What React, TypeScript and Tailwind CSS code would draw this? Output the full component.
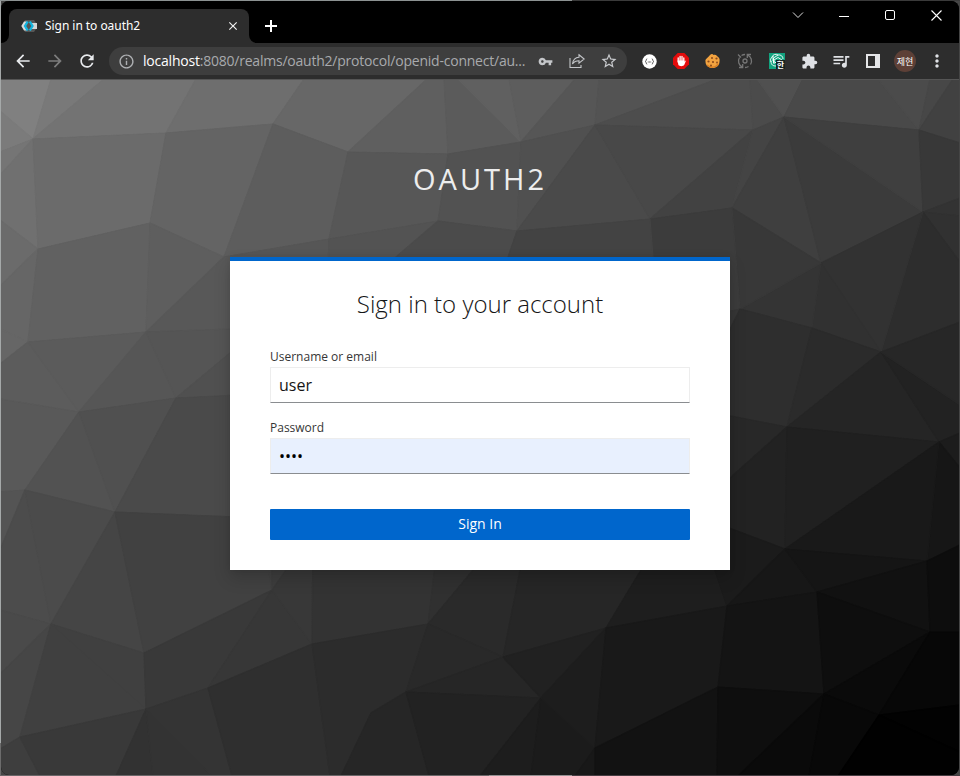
import React from "react";
import {
  MdArrowBack,
  MdArrowForward,
  MdClose,
  MdExtension,
  MdInfoOutline,
  MdMoreVert,
  MdQueueMusic,
  MdRefresh,
  MdStarBorder,
  MdVpnKey,
} from "react-icons/md";

// Facets of the low-poly backdrop: grey level and outline, in window coordinates.
const facets: [number, string][] = [
  [0x80, "0,79 51,79 33,139 0,111"],
  [0x79, "51,79 104,79 33,139"],
  [0x73, "104,79 196,79 166,133 33,139"],
  [0x6e, "196,79 304,79 273,124 166,133"],
  [0x67, "304,79 427,79 348,152 273,124"],
  [0x5f, "427,79 444,79 448,154 348,152"],
  [0x5b, "444,79 458,79 521,142 448,154"],
  [0x60, "458,79 509,79 521,142"],
  [0x5d, "509,79 575,79 521,142"],
  [0x56, "575,79 599,79 595,125 521,142"],
  [0x53, "599,79 717,79 595,125"],
  [0x4d, "717,79 750,79 753,130 595,125"],
  [0x4b, "750,79 757,79 784,117 753,130"],
  [0x50, "757,79 803,79 784,117"],
  [0x49, "803,79 878,79 919,130 784,117"],
  [0x4b, "878,79 930,79 919,130"],
  [0x47, "930,79 953,79 919,130"],
  [0x41, "953,79 960,79 960,143 919,130"],
  [0x7b, "0,111 33,139 0,152"],
  [0x75, "0,152 33,139 0,175"],
  [0x70, "0,175 33,139 38,249 0,220"],
  [0x6b, "0,220 38,249 0,286"],
  [0x66, "0,286 38,249 28,342 0,329"],
  [0x66, "0,329 28,342 0,364"],
  [0x6b, "33,139 166,133 150,223 38,249"],
  [0x64, "166,133 273,124 224,257 150,223"],
  [0x5d, "273,124 348,152 329,239 224,257"],
  [0x57, "348,152 448,154 438,221 329,239"],
  [0x52, "448,154 521,142 517,231 438,221"],
  [0x50, "521,142 595,125 517,231"],
  [0x4a, "595,125 650,219 517,231"],
  [0x48, "595,125 753,130 650,219"],
  [0x42, "753,130 732,208 650,219"],
  [0x44, "753,130 784,117 732,208"],
  [0x3f, "784,117 821,263 732,208"],
  [0x3b, "784,117 923,212 821,263"],
  [0x3f, "784,117 919,130 923,212"],
  [0x38, "919,130 960,143 960,198 923,212"],
  [0x33, "923,212 960,198 960,216"],
  [0x31, "923,212 960,216 960,262"],
  [0x2d, "923,212 960,262 960,322 881,352"],
  [0x32, "923,212 821,263 881,352"],
  [0x31, "821,263 881,352 812,328"],
  [0x34, "821,263 812,328 740,309"],
  [0x38, "732,208 821,263 740,309"],
  [0x3c, "650,219 732,208 740,309 700,318 650,309"],
  [0x56, "224,257 329,239 327,300 224,300"],
  [0x53, "329,239 438,221 396,257 396,300 327,300"],
  [0x4b, "438,221 517,231 508,257 508,300 396,300 396,257"],
  [0x43, "517,231 650,219 653,257 653,300 508,300 508,257"],
  [0x61, "38,249 150,223 146,332 28,342"],
  [0x5e, "150,223 224,257 146,332"],
  [0x58, "224,257 260,257 260,328 146,332"],
  [0x5c, "28,342 79,412 0,399 0,364"],
  [0x5b, "28,342 146,332 79,412"],
  [0x56, "146,332 176,398 79,412"],
  [0x55, "146,332 260,328 176,398"],
  [0x50, "176,398 260,328 260,394"],
  [0x59, "0,399 79,412 25,490 0,492"],
  [0x54, "0,492 25,490 0,550"],
  [0x52, "79,412 115,512 25,490"],
  [0x50, "79,412 176,398 115,512"],
  [0x4a, "176,398 260,394 260,518 115,512"],
  [0x4c, "25,490 51,624 0,610 0,550"],
  [0x4b, "25,490 115,512 51,624"],
  [0x45, "115,512 144,653 51,624"],
  [0x41, "115,512 260,518 272,590 144,653"],
  [0x4a, "0,610 51,624 0,674"],
  [0x46, "0,674 51,624 20,737 0,749"],
  [0x40, "51,624 146,709 20,737"],
  [0x40, "51,624 144,653 146,709"],
  [0x39, "144,653 272,590 208,688 146,709"],
  [0x37, "272,590 312,644 208,688"],
  [0x3e, "0,749 20,737 40,776 0,776"],
  [0x39, "20,737 146,709 116,776 40,776"],
  [0x32, "146,709 153,776 116,776"],
  [0x33, "146,709 212,776 153,776"],
  [0x34, "146,709 208,688 232,776 212,776"],
  [0x2f, "208,688 312,644 330,776 232,776"],
  [0x41, "260,518 272,550 272,590"],
  [0x3d, "272,540 307,540 272,590"],
  [0x38, "307,540 313,540 312,644 272,590"],
  [0x33, "313,540 440,540 428,624 312,644"],
  [0x30, "438,540 498,540 428,624"],
  [0x2a, "498,540 526,540 503,657 428,624"],
  [0x26, "526,540 659,540 606,628 503,657"],
  [0x1e, "659,540 705,540 727,606 606,628"],
  [0x2c, "312,644 428,624 406,692 371,713 341,776 330,776"],
  [0x29, "428,624 503,657 406,692"],
  [0x26, "503,657 541,698 406,692"],
  [0x21, "503,657 606,628 541,698"],
  [0x26, "371,713 406,692 429,776 341,776"],
  [0x22, "406,692 541,698 480,776 429,776"],
  [0x1d, "541,698 531,776 480,776"],
  [0x1b, "541,698 595,748 575,776 531,776"],
  [0x1d, "541,698 606,628 595,748"],
  [0x18, "595,748 595,776 575,776"],
  [0x19, "606,628 727,606 718,687 595,748"],
  [0x12, "595,748 718,687 717,776 595,776"],
  [0x36, "700,318 740,309 700,390"],
  [0x2e, "740,309 812,328 787,427 700,410 700,390"],
  [0x2b, "812,328 881,352 787,427"],
  [0x25, "881,352 939,442 787,427"],
  [0x22, "881,352 960,405 960,433 939,442"],
  [0x27, "881,352 960,322 960,405"],
  [0x28, "700,410 787,427 700,505"],
  [0x22, "787,427 785,549 700,517 700,505"],
  [0x20, "787,427 939,442 785,549"],
  [0x1c, "939,442 960,433 960,468"],
  [0x16, "939,442 960,468 960,545 927,561"],
  [0x19, "939,442 927,561 785,549"],
  [0x1b, "700,517 785,549 727,606 705,540"],
  [0x17, "785,549 817,592 727,606"],
  [0x15, "785,549 927,561 817,592"],
  [0x11, "927,561 930,632 817,592"],
  [0x0d, "927,561 960,545 960,632 930,632"],
  [0x14, "727,606 817,592 824,694 718,687"],
  [0x0e, "817,592 930,632 824,694"],
  [0x0a, "930,632 879,715 824,694"],
  [0x07, "930,632 960,632 960,705 879,715"],
  [0x0e, "718,687 824,694 738,776 717,776"],
  [0x0a, "824,694 809,776 738,776"],
  [0x08, "824,694 879,715 838,776 809,776"],
  [0x02, "879,715 960,705 960,752"],
  [0x01, "879,715 960,752 960,776 838,776"],
];

function Backdrop() {
  return (
    <svg className="col-start-1 row-start-1 block" width="958" height="695" viewBox="1 80 958 695">
      {facets.map(([level, points], i) => {
        const tone = `rgb(${level},${level},${level})`;
        return <polygon key={i} points={points} fill={tone} stroke={tone} strokeWidth="1.2" strokeLinejoin="bevel" />;
      })}
    </svg>
  );
}

function Slot({ children }: { children: React.ReactNode }) {
  return <span className="flex h-7 w-8 shrink-0 items-center justify-center">{children}</span>;
}

function KeycloakIcon() {
  return (
    <svg className="shrink-0" width="16" height="16" viewBox="0 0 16 16">
      <path d="M4 2h9l2 3v6l-2 3H4L1 8z" fill="#555" />
      <path d="M11 5h5v6h-5z" fill="#d4d4d4" />
      <path d="M3 3.500h3L3.500 8 6 12.500H3L.300 8z" fill="#dadada" />
      <path d="M6.700 3.500 4 8l2.700 4.500M8.800 3.500 11.500 8l-2.700 4.500" fill="none" stroke="#12b5e0" strokeWidth="2.300" />
    </svg>
  );
}

function TitleBar() {
  return (
    <div className="flex h-[42px] items-start bg-black">
      <div className="flex h-[42px] w-2 items-end bg-[#2d2d2d]">
        <div className="h-[42px] w-2 rounded-br-lg bg-black" />
      </div>
      <div className="mt-2 flex h-[34px] w-60 items-center rounded-t-lg bg-[#2d2d2d] pl-3 pr-[9px]">
        <KeycloakIcon />
        <span className="ml-2 flex-1 whitespace-nowrap font-['Noto_Sans','Open_Sans',sans-serif] text-[12px] leading-4 tracking-[-0.05px] text-white">
          Sign in to oauth2
        </span>
        <MdClose size={14} color="#f1f1f1" />
      </div>
      <div className="h-[42px] w-2 bg-[#2d2d2d]">
        <div className="h-[42px] w-2 rounded-bl-lg bg-black" />
      </div>
      <svg className="mt-[19px] ml-2" width="12" height="12" viewBox="0 0 12 12" fill="#fff">
        <path d="M5 0h2v5h5v2H7v5H5V7H0V5h5z" />
      </svg>
      <div className="ml-auto flex">
        <span className="flex h-7 w-[46px] items-center justify-center">
          <svg width="12" height="8" viewBox="0 0 12 8" fill="none" stroke="#ddd">
            <path d="m1 1.500 5 5 5-5" />
          </svg>
        </span>
        <span className="flex h-7 w-[46px] items-center justify-center">
          <span className="mt-0.5 h-px w-2.5 bg-white" />
        </span>
        <span className="flex h-7 w-[46px] items-center justify-center">
          <span className="size-2.5 rounded-[2px] border border-white" />
        </span>
        <span className="flex h-7 w-[46px] items-center justify-center">
          <svg width="11" height="11" viewBox="0 0 11 11" stroke="#fff" strokeWidth="1.100">
            <path d="m.5.5 10 10m0-10-10 10" />
          </svg>
        </span>
      </div>
    </div>
  );
}

function Toolbar() {
  return (
    <div className="flex h-9 items-center bg-[#2d2d2d] pl-1.5">
      <Slot><MdArrowBack size={20} color="#e8eaed" /></Slot>
      <Slot><MdArrowForward size={20} color="#7c7c7c" /></Slot>
      <Slot><MdRefresh size={20} color="#e8eaed" /></Slot>
      <div className="ml-1.5 flex h-7 w-[518px] shrink-0 items-center rounded-full bg-[#3e3e3e] pl-[9px] pr-0.5">
        <MdInfoOutline className="shrink-0" size={17} color="#aeb0b3" />
        <span className="ml-2 w-[386px] shrink-0 whitespace-nowrap font-['Open_Sans','Noto_Sans',sans-serif] text-[14px] leading-5 tracking-[-0.22px] text-[#a8aaad]">
          <span className="text-white">localhost</span>:8080/realms/oauth2/protocol/openid-connect/au...
        </span>
        <div className="ml-auto flex">
          <Slot><MdVpnKey size={15} color="#c4c6c9" /></Slot>
          <Slot>
            <svg width="16" height="16" viewBox="0 0 16 16" fill="none" stroke="#c4c6c9" strokeWidth="1.100">
              <path d="M1 5v9.500h11V12" />
              <path d="M10 1.800 15.200 6 10 10.200V7.800C7.500 7.800 5 8.700 3.500 11 4 7.200 6.500 4.500 10 4.300z" />
            </svg>
          </Slot>
          <Slot><MdStarBorder size={18} color="#c8cacd" /></Slot>
        </div>
      </div>
      <div className="ml-1.5 flex items-center">
        <Slot>
          <svg width="15" height="15" viewBox="0 0 15 15">
            <circle cx="7.500" cy="7.500" r="7.200" fill="#fff" />
            <path d="M5.200 4.800C3.800 4.800 4.800 6.800 3.300 7.500c1.500.700.500 2.700 1.900 2.700M9.800 4.800c1.400 0 .4 2 1.900 2.700-1.500.700-.5 2.700-1.900 2.700M5.800 8h.9m.4 0H8m.3 0h.9" fill="none" stroke="#555" />
          </svg>
        </Slot>
        <Slot>
          <svg width="16" height="16" viewBox="0 0 16 16">
            <path d="M4.700 0h6.600L16 4.700v6.600L11.300 16H4.700L0 11.300V4.700z" fill="#e30b0b" />
            <path d="M5.200 9V4.800M7.100 8V3.300M9 8V3.300M10.800 9V5" stroke="#fff" strokeWidth="1.300" strokeLinecap="round" />
            <path d="M4.500 7.500h6.900v1.200l1.800-1.400-2 4.700c-1 1.500-4.700 1.500-5.800 0z" fill="#fff" />
          </svg>
        </Slot>
        <Slot>
          <svg width="16" height="16" viewBox="0 0 16 16">
            <path d="M5 2c1.500-1.500 3-1 3.500 0 2-1 3.500.5 4 1.500 2 1 2.500 3 2 5 0 4-3 6.500-7 6.500-4 0-7-2.500-7-6.500C0 6 2 5.500 5 2z" fill="#f2a340" />
            <path d="M2 12c3 3 8.500 3 11.500-1" fill="none" stroke="#d87f23" strokeWidth="1.500" />
            <g fill="#8b4a1b">
              <circle cx="7" cy="5" r="1" /><circle cx="11.500" cy="5.500" r="1.100" />
              <circle cx="3.500" cy="8.500" r="1.100" /><circle cx="8" cy="9" r="1.100" />
              <circle cx="12" cy="9.500" r=".9" /><circle cx="6" cy="12.500" r="1" />
            </g>
          </svg>
        </Slot>
        <Slot>
          <svg width="16" height="16" viewBox="0 0 16 16" fill="none" stroke="#757575" strokeWidth="1.300">
            <path d="M5.500 14A6.500 6.500 0 0 1 2.500 4.500M2 14.500h3.700V11" />
            <path d="M4.500 2.500A6.500 6.500 0 0 1 8 1.500" />
            <path d="M10.500 2A6.500 6.500 0 0 1 13.500 11.500M14 1.500h-3.700V5" />
            <path d="M11.500 13.500A6.500 6.500 0 0 1 8 14.500M1 1.500l3 3" />
            <circle cx="8" cy="8" r="2" />
          </svg>
        </Slot>
        <Slot>
          <span className="grid size-4 bg-[#12a37f]">
            <svg className="col-start-1 row-start-1" width="16" height="16" viewBox="0 0 16 16" fill="none" stroke="#fff" strokeWidth=".9">
              <path d="M2 9a4 4 0 0 1 1-5 4 4 0 0 1 6-2 4 4 0 0 1 5 4M2 8c0 4 2 5 5 5M4 3v5l5 3M9 2 4.500 5v5M13 7 9 4.500 5 7v4" />
            </svg>
            <span className="col-start-1 row-start-1 mt-[7px] ml-[7px] flex size-[9px] items-center justify-center overflow-hidden bg-[#172421] font-['Noto_Sans_CJK_KR',sans-serif] text-[8px] font-bold leading-[9px] text-white">
              한
            </span>
          </span>
        </Slot>
        <Slot><MdExtension size={17} color="#dfe1e5" /></Slot>
        <Slot><MdQueueMusic size={20} color="#dfe1e5" /></Slot>
        <Slot><span className="h-3.5 w-3.5 border-2 border-r-[5px] border-[#e4e5e7]" /></Slot>
        <Slot>
          <span className="flex size-[22px] items-center justify-center rounded-full bg-[#5d4037] font-['Noto_Sans_CJK_KR',sans-serif] text-[9px] leading-none text-white">
            제현
          </span>
        </Slot>
        <Slot><MdMoreVert size={20} color="#dfe1e5" /></Slot>
      </div>
    </div>
  );
}

function LoginPage() {
  return (
    <div className="col-start-1 row-start-1 flex flex-col items-center font-['Open_Sans',sans-serif]">
      <div className="mt-[81px] text-[29px] leading-9 tracking-[3px] text-[#ededed]">OAUTH2</div>
      <div className="mt-[60px] h-[313px] w-[500px] border-t-4 border-[#0066cc] bg-white px-10 shadow-[0_8px_16px_rgba(3,3,3,0.16),0_0_6px_rgba(3,3,3,0.08)]">
        <h1 className="mt-[27px] text-center text-[24px] font-light leading-8 text-[#151515]">Sign in to your account</h1>
        <label className="mt-[28px] block text-[12px] leading-[18px] text-[#363636]">Username or email</label>
        <div className="mt-px flex h-9 items-center border border-[#ededed] border-b-[#8a8d90] px-2 text-[16px] leading-6 text-[#151515]">
          user
        </div>
        <label className="mt-4 block text-[12px] leading-[18px] text-[#363636]">Password</label>
        <div className="mt-px flex h-9 items-center border border-[#ededed] border-b-[#8a8d90] bg-[#e8f0fe] px-2 text-[16px] leading-6 text-black">
          ••••
        </div>
        <button className="mt-[35px] flex h-[31px] w-full items-center justify-center rounded-[1px] bg-[#0066cc] pb-0.5 text-[14px] leading-5 text-white">
          Sign In
        </button>
      </div>
    </div>
  );
}

export default function App() {
  return (
    <div className="flex h-[776px] w-[960px] flex-col overflow-hidden bg-[#454545]">
      <div className="flex h-px">
        <div className="w-[572px] bg-[#8c9292]" />
        <div className="flex-1 bg-[#3a3a3a]" />
      </div>
      <div className="flex h-[774px]">
        <div className="w-px bg-[#6c6c6c]">
          <div className="h-[742px] bg-[#a5a9a9]" />
        </div>
        <div className="h-[774px] w-[958px] overflow-hidden rounded-lg bg-black">
          <TitleBar />
          <Toolbar />
          <div className="h-px bg-[#555]" />
          <main className="grid h-[695px] grid-cols-1">
            <Backdrop />
            <LoginPage />
          </main>
        </div>
      </div>
      <div className="flex h-px">
        <div className="w-[489px] bg-[#6a6668]" />
        <div className="w-[83px] bg-[#949092]" />
        <div className="flex-1 bg-[#453c41]" />
      </div>
    </div>
  );
}
